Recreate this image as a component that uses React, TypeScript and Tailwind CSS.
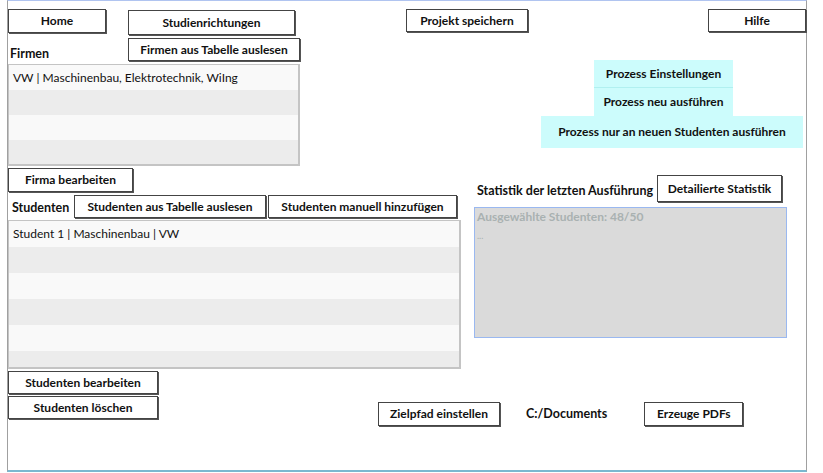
const font = { fontFamily: 'Lato, "DejaVu Sans", sans-serif' };

function Btn({ label, className = '' }: { label: string; className?: string }) {
  return (
    <button
      className={`flex items-center justify-center whitespace-nowrap bg-white border border-[#444] shadow-[1px_1px_0_#555] text-[12px] font-bold text-[#111] ${className}`}
    >
      {label}
    </button>
  );
}

function CyanBtn({ label, className = '' }: { label: string; className?: string }) {
  return (
    <div className={`flex items-center justify-center whitespace-nowrap bg-[#ccfcfc] text-[12px] font-bold text-[#111] ${className}`}>
      {label}
    </div>
  );
}

function List({ rows, count, rowH, className = '' }: { rows: string[]; count: number; rowH: string; className?: string }) {
  return (
    <div className={`flex flex-col overflow-hidden border border-[#c4c4c4] border-r-2 border-b-2 ${className}`}>
      {Array.from({ length: count }).map((_, i) => (
        <div
          key={i}
          className={`${rowH} shrink-0 flex items-center px-1 text-[12px] text-[#111] ${i % 2 === 0 ? 'bg-[#f9f9f9]' : 'bg-[#ececec]'}`}
        >
          {rows[i] ?? ''}
        </div>
      ))}
    </div>
  );
}

export default function App() {
  return (
    <div className="w-[823px] h-[473px] bg-white overflow-hidden" style={font}>
      <div className="ml-[7px] w-[800px] h-[472px] border-l border-r border-[#a0a0a0] border-b-2 border-b-[#7ab8d0] border-t border-t-[#b0c4f0] flex flex-col">
        {/* top bar */}
        <div className="flex items-start pt-[8px]">
          <Btn label="Home" className="w-[98px] h-[24px]" />
          <Btn label="Studienrichtungen" className="ml-[22px] mt-[1px] w-[167px] h-[25px]" />
          <Btn label="Projekt speichern" className="ml-[111px] w-[122px] h-[23px]" />
          <Btn label="Hilfe" className="ml-auto w-[98px] h-[23px]" />
        </div>

        <div className="flex">
          {/* left column */}
          <div className="w-[453px] flex flex-col">
            <div className="flex items-end h-[26px]">
              <span className="w-[118px] ml-[2px] mb-[-3px] text-[12.5px] font-bold text-[#111]">Firmen</span>
              <Btn label="Firmen aus Tabelle auslesen" className="w-[172px] h-[23px]" />
            </div>
            <List
              rows={['VW | Maschinenbau, Elektrotechnik, WiIng']}
              count={4}
              rowH="h-[25px]"
              className="mt-[3px] w-[292px] h-[102px]"
            />
            <Btn label="Firma bearbeiten" className="mt-[2px] w-[125px] h-[24px]" />
            <div className="flex items-center mt-[3px] h-[23px]">
              <span className="ml-[4px] mt-[4px] w-[62px] text-[12.5px] font-bold text-[#111]">Studenten</span>
              <Btn label="Studenten aus Tabelle auslesen" className="w-[192px] h-[23px]" />
              <Btn label="Studenten manuell hinzufügen" className="ml-[2px] w-[189px] h-[23px]" />
            </div>
            <List
              rows={['Student 1 | Maschinenbau | VW']}
              count={6}
              rowH="h-[26px]"
              className="mt-[2px] w-[453px] h-[149px]"
            />
          </div>

          {/* right column */}
          <div className="flex-1 flex flex-col pl-[13px]">
            <div className="flex flex-col items-end pr-[3px] mt-[25px]">
              <CyanBtn label="Prozess Einstellungen" className="mr-[70px] w-[139px] h-[28px] border-b border-[#b0f0f0]" />
              <CyanBtn label="Prozess neu ausführen" className="mr-[70px] w-[139px] h-[28px]" />
              <CyanBtn label="Prozess nur an neuen Studenten ausführen" className="w-[262px] h-[32px]" />
            </div>
            <div className="flex items-center mt-[27px]">
              <span className="ml-[3px] mt-[5px] whitespace-nowrap text-[12.5px] font-bold text-[#111]">Statistik der letzten Ausführung</span>
              <Btn label="Detailierte Statistik" className="ml-auto mr-[24px] w-[125px] h-[27px]" />
            </div>
            <div className="mt-[5px] w-[313px] h-[131px] bg-[#dadada] border border-[#9ab8f0] px-[2px] text-[12px] text-[#a9b1b1] font-bold">
              <div>Ausgewählte Studenten: 48/50</div>
              <div className="font-normal text-[9px] leading-[12px] mt-[4px]">...</div>
            </div>
          </div>
        </div>

        {/* bottom */}
        <div className="flex items-start mt-[2px]">
          <div className="flex flex-col gap-[2px]">
            <Btn label="Studenten bearbeiten" className="w-[150px] h-[23px]" />
            <Btn label="Studenten löschen" className="w-[150px] h-[23px]" />
          </div>
          <div className="flex items-center mt-[31px] ml-[220px]">
            <Btn label="Zielpfad einstellen" className="w-[122px] h-[24px]" />
            <span className="ml-[26px] text-[12.5px] font-bold text-[#111]">C:/Documents</span>
            <Btn label="Erzeuge PDFs" className="ml-[37px] w-[99px] h-[24px]" />
          </div>
        </div>
      </div>
    </div>
  );
}
